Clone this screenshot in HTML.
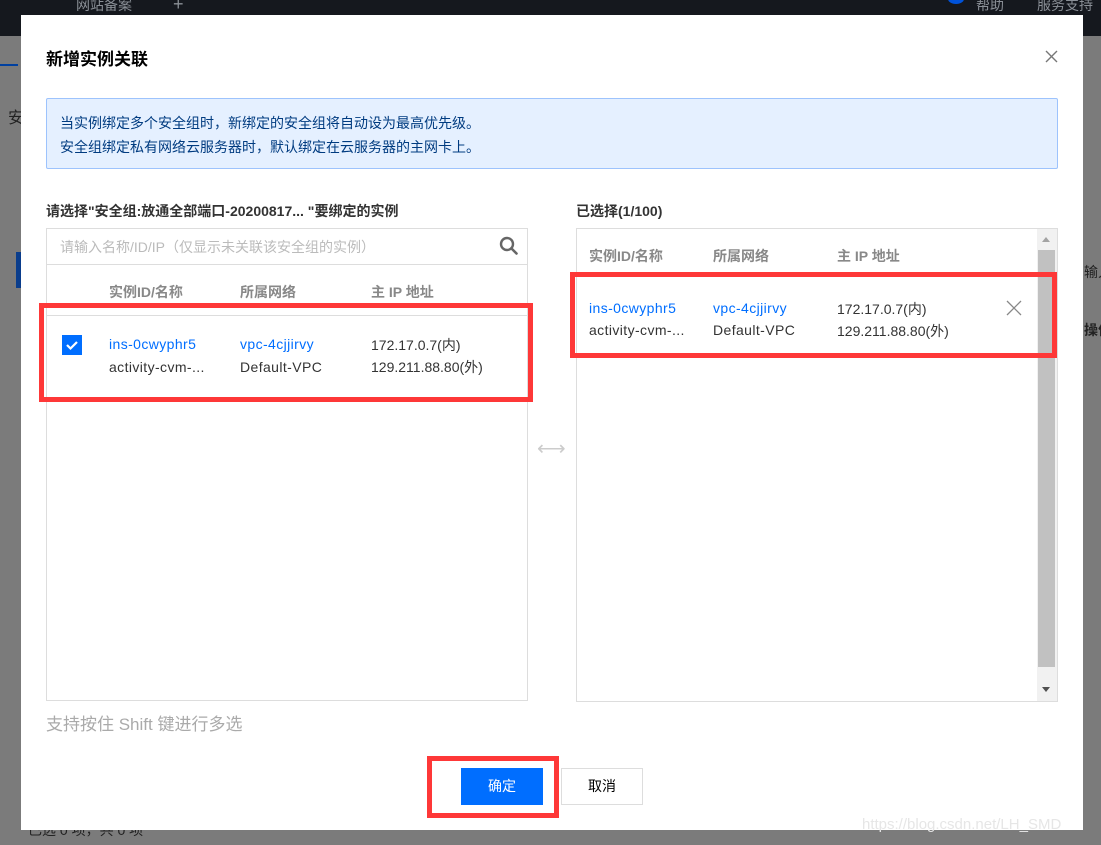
<!DOCTYPE html>
<html style="background-color:#7b7b7b"><head><meta charset="utf-8"><style>
*{margin:0;padding:0;box-sizing:border-box}
html,body{background-color:#7b7b7b}
body{width:1101px;height:845px;position:relative;overflow:hidden;font-family:"Liberation Sans","Noto Sans CJK SC",sans-serif;font-size:14px;color:#000}
.a{position:absolute;white-space:nowrap}
.blue{color:#006eff}
.dk{color:#333}
.hd{color:#888;font-weight:bold}
.red{position:absolute;border:5px solid #fe3838}
.w{letter-spacing:0.4px}
</style></head><body>
<svg class="a" style="left:0;top:0" width="1101" height="845"><rect x="0" y="0" width="1101" height="845" fill="#7b7b7b"/></svg>
<div class="a" style="left:0;top:36px;width:1101px;height:809px;background-color:#7b7b7b"></div>
<div class="a" style="left:0;top:0;width:1101px;height:36px;background:#15181e"></div>
<div class="a" style="left:76px;top:-5px;color:#8a8f96;font-size:14px">网站备案</div>
<div class="a" style="left:173px;top:-6px;color:#8a8f96;font-size:18px">+</div>
<div class="a" style="left:976px;top:-5px;color:#8a8f96">帮助</div>
<div class="a" style="left:1037px;top:-5px;color:#8a8f96">服务支持</div>
<div class="a" style="left:948px;top:-6px;width:16px;height:10px;border-radius:50%;background:#0052d9"></div>
<div class="a" style="left:0;top:64px;width:18px;height:2px;background:#0040a0"></div>
<div class="a" style="left:8px;top:104px;color:#222;font-size:16px">安</div>
<div class="a" style="left:16px;top:252px;width:6px;height:36px;background:#0a3d8c"></div>
<div class="a" style="left:1084px;top:262px;color:#222">输入</div>
<div class="a" style="left:1084px;top:320px;color:#222;font-weight:bold">操作</div>
<div class="a" style="left:28px;top:820px;color:#222">已选 0 项，共 0 项</div>

<div class="a" style="left:21px;top:15px;width:1062px;height:815px;background:#fff"></div>
<div class="a" style="left:46px;top:45px;font-size:17px;font-weight:bold;color:#000">新增实例关联</div>
<svg class="a" style="left:1045px;top:50px" width="13" height="13" viewBox="0 0 13 13"><path d="M1 1L12 12M12 1L1 12" stroke="#777" stroke-width="1.4"/></svg>

<div class="a" style="left:46px;top:98px;width:1012px;height:71px;background:#e5f0ff;border:1px solid #9dc3fd;border-radius:2px"></div>
<div class="a" style="left:60px;top:111px;color:#003b80;font-size:14px;line-height:24px">当实例绑定多个安全组时，新绑定的安全组将自动设为最高优先级。<br>安全组绑定私有网络云服务器时，默认绑定在云服务器的主网卡上。</div>

<div class="a" style="left:46px;top:201px;font-weight:bold;color:#333">请选择"安全组:放通全部端口-20200817... "要绑定的实例</div>
<div class="a" style="left:576px;top:201px;font-weight:bold;color:#333">已选择(1/100)</div>

<div class="a" style="left:46px;top:228px;width:482px;height:473px;border:1px solid #ddd"></div>
<div class="a" style="left:47px;top:264px;width:480px;height:1px;background:#ddd"></div>
<div class="a" style="left:60px;top:237px;color:#bbb">请输入名称/ID/IP（仅显示未关联该安全组的实例）</div>
<svg class="a" style="left:499px;top:236px" width="20" height="20" viewBox="0 0 20 20"><circle cx="8" cy="8" r="6" fill="none" stroke="#666" stroke-width="2.4"/><path d="M12.5 12.5L17.5 17.5" stroke="#666" stroke-width="2.6" stroke-linecap="round"/></svg>
<div class="a hd" style="left:109px;top:282px">实例ID/名称</div>
<div class="a hd" style="left:240px;top:282px">所属网络</div>
<div class="a hd" style="left:371px;top:282px">主 IP 地址</div>
<div class="a" style="left:47px;top:315px;width:480px;height:1px;background:#ddd"></div>
<div class="a" style="left:62px;top:335px;width:20px;height:20px;background:#006eff"></div>
<svg class="a" style="left:62px;top:335px" width="20" height="20" viewBox="0 0 20 20"><path d="M5 10L8.5 13.5L15 7" fill="none" stroke="#fff" stroke-width="2.2"/></svg>
<div class="a blue w" style="left:109px;top:336px">ins-0cwyphr5</div>
<div class="a dk w" style="left:109px;top:359px">activity-cvm-...</div>
<div class="a blue w" style="left:240px;top:336px">vpc-4cjjirvy</div>
<div class="a dk w" style="left:240px;top:359px">Default-VPC</div>
<div class="a dk" style="left:371px;top:335px">172.17.0.7(内)</div>
<div class="a dk" style="left:371px;top:357px">129.211.88.80(外)</div>
<div class="red" style="left:39px;top:303px;width:494px;height:99px"></div>

<div class="a" style="left:537px;top:436px;color:#ccc;font-size:20px">⟷</div>

<div class="a" style="left:576px;top:228px;width:482px;height:474px;border:1px solid #ddd"></div>
<div class="a" style="left:1037px;top:229px;width:20px;height:472px;background:#f1f1f1"></div>
<div class="a" style="left:1038px;top:250px;width:17px;height:417px;background:#c1c1c1"></div>
<svg class="a" style="left:1041px;top:236px" width="10" height="7"><path d="M1 6L5 1L9 6Z" fill="#a3a3a3"/></svg>
<svg class="a" style="left:1041px;top:686px" width="10" height="7"><path d="M1 1L5 6L9 1Z" fill="#505050"/></svg>
<div class="a hd" style="left:589px;top:246px">实例ID/名称</div>
<div class="a hd" style="left:713px;top:246px">所属网络</div>
<div class="a hd" style="left:837px;top:246px">主 IP 地址</div>
<div class="a blue w" style="left:589px;top:300px">ins-0cwyphr5</div>
<div class="a dk w" style="left:589px;top:322px">activity-cvm-...</div>
<div class="a blue w" style="left:713px;top:300px">vpc-4cjjirvy</div>
<div class="a dk w" style="left:713px;top:322px">Default-VPC</div>
<div class="a dk" style="left:837px;top:299px">172.17.0.7(内)</div>
<div class="a dk" style="left:837px;top:321px">129.211.88.80(外)</div>
<svg class="a" style="left:1006px;top:300px" width="16" height="16" viewBox="0 0 16 16"><path d="M1 1L15 15M15 1L1 15" stroke="#888" stroke-width="1.3"/></svg>
<div class="red" style="left:570px;top:272px;width:487px;height:86px"></div>

<div class="a" style="left:46px;top:710px;color:#aaa;font-size:17px">支持按住 Shift 键进行多选</div>

<div class="red" style="left:427px;top:756px;width:132px;height:62px"></div>
<div class="a" style="left:461px;top:768px;width:82px;height:37px;background:#006eff;color:#fff;text-align:center;line-height:37px">确定</div>
<div class="a" style="left:561px;top:768px;width:82px;height:37px;border:1px solid #ddd;background:#fff;color:#000;text-align:center;line-height:35px">取消</div>
<div class="a" style="left:862px;top:816px;color:#e6e6e6;font-size:15px">https://blog.csdn.net/LH_SMD</div>
</body></html>
